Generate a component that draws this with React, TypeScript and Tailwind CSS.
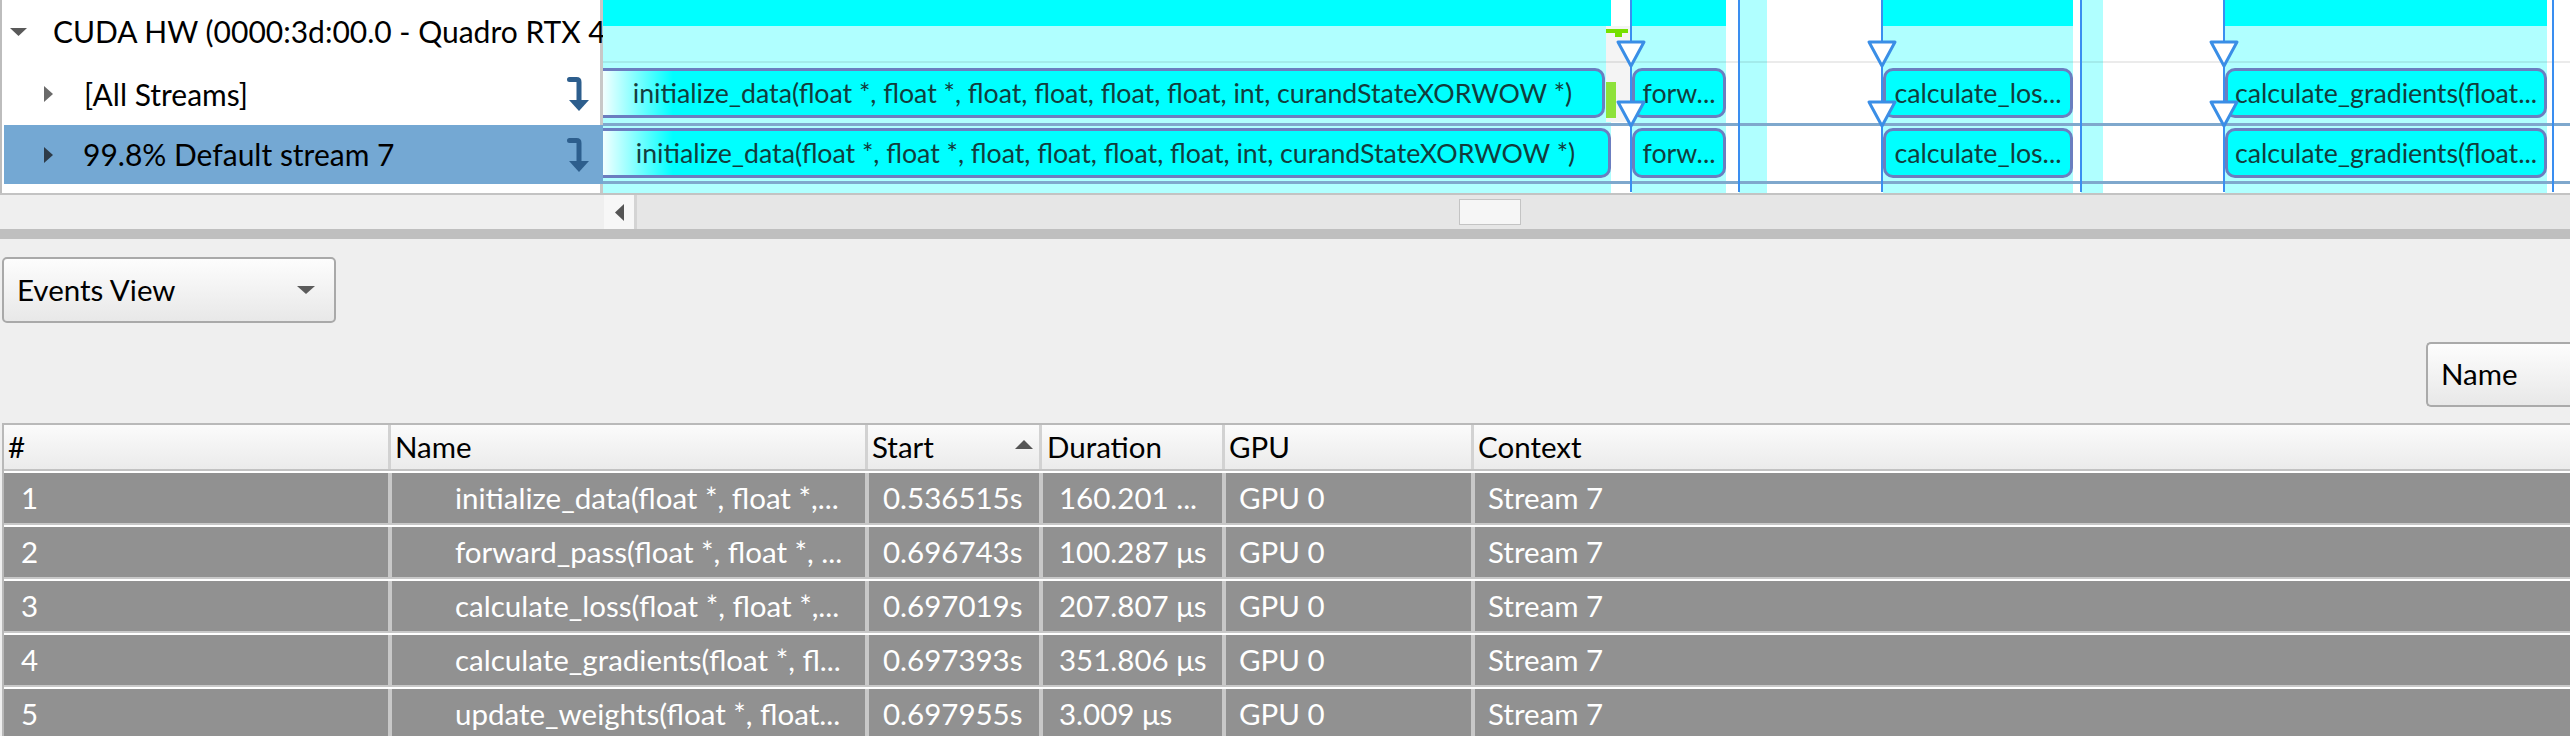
import React from 'react'

// timeline pieces, x is relative to the left edge of the timeline (page x 603)
interface Band {
  left: number
  width: number
  top: boolean
}

interface Kernel {
  left: number
  width: number
  label: string
  cut?: boolean
}

const bands: Band[] = [
  { left: 0, width: 1008, top: true },
  { left: 1029, width: 94, top: true },
  { left: 1136, width: 28, top: false },
  { left: 1280, width: 190, top: true },
  { left: 1478, width: 22, top: false },
  { left: 1622, width: 322, top: true },
]

const blueLines = [1027, 1135, 1278, 1477, 1620, 1949]
const markers = [1028, 1279, 1621]

const INIT_LABEL =
  'initialize_data(float *, float *, float, float, float, float, int, curandStateXORWOW *)'

const streamRow: Kernel[] = [
  { left: 0, width: 1002, label: INIT_LABEL, cut: true },
  { left: 1029, width: 94, label: 'forw...' },
  { left: 1280, width: 190, label: 'calculate_los...' },
  { left: 1622, width: 322, label: 'calculate_gradients(float...' },
]

const defaultRow: Kernel[] = [
  { left: 0, width: 1008, label: INIT_LABEL, cut: true },
  { left: 1029, width: 94, label: 'forw...' },
  { left: 1280, width: 190, label: 'calculate_los...' },
  { left: 1622, width: 322, label: 'calculate_gradients(float...' },
]

const events = [
  { id: 1, name: 'initialize_data(float *, float *,...', start: '0.536515s', duration: '160.201 ...' },
  { id: 2, name: 'forward_pass(float *, float *, ...', start: '0.696743s', duration: '100.287 μs' },
  { id: 3, name: 'calculate_loss(float *, float *,...', start: '0.697019s', duration: '207.807 μs' },
  { id: 4, name: 'calculate_gradients(float *, fl...', start: '0.697393s', duration: '351.806 μs' },
  { id: 5, name: 'update_weights(float *, float...', start: '0.697955s', duration: '3.009 μs' },
]

const HookArrow: React.FC = () => (
  <svg width="22" height="34" viewBox="0 0 22 34">
    <path
      d="M2.5 2.5H9.5Q12 2.5 12 5V25"
      fill="none"
      stroke="#2d5e8d"
      strokeWidth="5"
      strokeLinecap="round"
    />
    <polygon points="2,23 22,23 12,34" fill="#2d5e8d" />
  </svg>
)

const RightTriangle: React.FC<{ color: string }> = ({ color }) => (
  <svg width="9" height="16" viewBox="0 0 9 16" className="shrink-0">
    <polygon points="0,0 9,8 0,16" fill={color} />
  </svg>
)

const KernelBox: React.FC<{ k: Kernel; top: number }> = ({ k, top }) => (
  <div
    className={
      k.cut
        ? 'absolute h-[50px] flex items-center justify-center overflow-hidden whitespace-nowrap rounded-r-[10px] border-y-[3px] border-r-[3px] border-[#6b7ec0] bg-[linear-gradient(90deg,#f2ffff_0px,#00ffff_70px)] text-[26.7px] text-[#123d3d]'
        : 'absolute h-[50px] flex items-center justify-center overflow-hidden whitespace-nowrap rounded-[10px] border-[3px] border-[#6b7ec0] bg-[#00ffff] px-[4px] text-[26.7px] text-[#123d3d]'
    }
    style={{ left: k.left, width: k.width, top }}
  >
    {k.label}
  </div>
)

const Marker: React.FC<{ x: number; top: number }> = ({ x, top }) => (
  <svg
    width="32"
    height="30"
    viewBox="0 0 32 30"
    className="absolute"
    style={{ left: x - 16, top }}
  >
    <polygon
      points="3,3 29,3 16,27"
      fill="white"
      stroke="#3a8ee6"
      strokeWidth="3"
      strokeLinejoin="round"
    />
  </svg>
)

const Timeline: React.FC = () => (
  <div className="relative flex-1 overflow-hidden bg-white">
    {bands.map((b) => (
      <div
        key={b.left}
        className="absolute top-0 bottom-0 bg-[#b0ffff]"
        style={{ left: b.left, width: b.width }}
      >
        {b.top && <div className="h-[26px] bg-[#00ffff]" />}
      </div>
    ))}

    {/* gap after the first kernel */}
    <div className="absolute left-[1003px] top-[26px] h-[96px] w-[24px] bg-[#f4f4f4]" />
    <div className="absolute left-[1003px] top-[29px] h-[4px] w-[22px] bg-[#76e000]" />
    <div className="absolute left-[1012px] top-[33px] h-[4px] w-[7px] bg-[#76e000]" />
    <div className="absolute left-[1003px] top-[82px] h-[36px] w-[10px] bg-[#8ee23a]" />

    {/* row separators */}
    <div className="absolute left-0 right-0 top-[61px] h-[2px] bg-black/[0.08]" />
    <div className="absolute left-0 right-0 top-[123px] h-[3px] bg-[#7fa8cd]" />
    <div className="absolute left-0 right-0 top-[181px] h-[3px] bg-[#7fa8cd]" />

    {blueLines.map((x) => (
      <div
        key={x}
        className="absolute top-0 h-[192px] w-[2px] bg-[#3a8ef0]"
        style={{ left: x }}
      />
    ))}

    {streamRow.map((k) => (
      <KernelBox key={'s' + k.left} k={k} top={68} />
    ))}
    {defaultRow.map((k) => (
      <KernelBox key={'d' + k.left} k={k} top={128} />
    ))}

    {markers.map((x) => (
      <React.Fragment key={x}>
        <Marker x={x} top={39} />
        <Marker x={x} top={99} />
      </React.Fragment>
    ))}
  </div>
)

const TreePanel: React.FC = () => (
  <div className="flex w-[603px] border-l-2 border-r-[3px] border-l-[#bdbdbd] border-r-[#c8c8c8] bg-white">
    <div className="flex flex-1 flex-col pl-[2px] text-[30px] text-black">
      <div className="flex h-[63px] items-center overflow-hidden whitespace-nowrap">
        <svg width="17" height="8" viewBox="0 0 17 8" className="ml-[6px] shrink-0">
          <polygon points="0,0 17,0 8.5,8" fill="#595959" />
        </svg>
        <span className="ml-[26px]">CUDA HW (0000:3d:00.0 - Quadro RTX 4</span>
      </div>
      <div className="flex h-[62px] items-center whitespace-nowrap">
        <div className="ml-[40px]">
          <RightTriangle color="#6a6a6a" />
        </div>
        <span className="ml-[31px] flex-1">[All Streams]</span>
        <div className="mr-[17px] flex">
          <HookArrow />
        </div>
      </div>
      <div className="flex h-[59px] items-center whitespace-nowrap bg-[#74a8d3]">
        <div className="ml-[40px]">
          <RightTriangle color="#2e3b48" />
        </div>
        <span className="ml-[30px] flex-1">99.8% Default stream 7</span>
        <div className="mr-[17px] flex">
          <HookArrow />
        </div>
      </div>
    </div>
    <div className="flex w-[11px] flex-col">
      <div className="h-[61px] bg-[#80fffc]" />
      <div className="h-[7px]" />
      <div className="h-[54px] bg-[#80fffc]" />
      <div className="h-[3px]" />
      <div className="h-[3px] bg-[#74a8d3]" />
      <div className="h-[55px] bg-[#3cd6e8]" />
      <div className="h-[1px] bg-[#74a8d3]" />
    </div>
  </div>
)

const ScrollBar: React.FC = () => (
  <div className="flex h-[34px]">
    <div className="w-[604px] bg-[#efefef]" />
    <div className="flex w-[30px] items-center justify-center bg-[#f7f7f7]">
      <svg width="9" height="17" viewBox="0 0 9 17">
        <polygon points="9,0 0,8.5 9,17" fill="#555555" />
      </svg>
    </div>
    <div className="w-[3px] bg-[#d4d4d4]" />
    <div className="flex flex-1 items-center bg-[#e6e6e6]">
      <div className="ml-[822px] h-[26px] w-[62px] border border-[#c4c4c4] bg-[#f6f6f6]" />
    </div>
  </div>
)

const headerCell =
  'flex h-[44px] items-center border-l-[3px] border-[#d2d2d2] pl-[4px]'
const rowCell = 'flex h-[50px] items-center border-l-4 border-[#c8c8c8]'

const EventsTable: React.FC = () => (
  <div className="ml-[2px] border-l-2 border-t-2 border-[#b9b9b9] text-[29.5px]">
    <div className="flex border-b-2 border-[#c2c2c2] bg-linear-to-b from-[#fbfbfb] to-[#ebebeb] text-black">
      <div className="flex h-[44px] w-[384px] items-center pl-[4px]">#</div>
      <div className={headerCell + ' w-[477px]'}>Name</div>
      <div className={headerCell + ' w-[174px]'}>
        <span className="flex-1">Start</span>
        <svg width="18" height="9" viewBox="0 0 18 9" className="mr-[6px] mb-[6px]">
          <polygon points="0,9 18,9 9,0" fill="#555555" />
        </svg>
      </div>
      <div className={headerCell + ' w-[183px] pl-[5px]'}>Duration</div>
      <div className={headerCell + ' w-[249px]'}>GPU</div>
      <div className={headerCell + ' flex-1'}>Context</div>
    </div>
    {events.map((e) => (
      <div
        key={e.id}
        className="flex border-t-2 border-b-2 border-t-white border-b-[#c8c8c8] bg-[#919191] text-white whitespace-nowrap"
      >
        <div className="flex h-[50px] w-[384px] items-center pl-[17px]">{e.id}</div>
        <div className={rowCell + ' w-[477px] overflow-hidden pl-[63px]'}>{e.name}</div>
        <div className={rowCell + ' w-[174px] pl-[14px]'}>{e.start}</div>
        <div className={rowCell + ' w-[183px] pl-[16px]'}>{e.duration}</div>
        <div className={rowCell + ' w-[249px] pl-[13px]'}>GPU 0</div>
        <div className={rowCell + ' flex-1 pl-[13px]'}>Stream 7</div>
      </div>
    ))}
  </div>
)

export default function App() {
  return (
    <div className="h-[736px] w-[2570px] overflow-hidden bg-[#efefef] font-[family-name:Lato,sans-serif]">
      <div className="flex h-[195px] border-b-2 border-[#c3c3c3] bg-white">
        <TreePanel />
        <Timeline />
      </div>
      <ScrollBar />
      <div className="h-[10px] bg-[#bfbfbf]" />

      <div className="flex flex-col">
        <div className="ml-[2px] mt-[18px] flex h-[66px] w-[334px] items-center rounded-[5px] border-2 border-[#a9a9a9] bg-linear-to-b from-[#fdfdfd] to-[#e8e8e8] pl-[13px] pr-[19px] text-[29.5px] text-black">
          <span className="flex-1">Events View</span>
          <svg width="18" height="8" viewBox="0 0 18 8">
            <polygon points="0,0 18,0 9,8" fill="#5b5b5b" />
          </svg>
        </div>

        <div className="mt-[19px] flex justify-end">
          <div className="flex h-[65px] w-[144px] items-center rounded-l-[5px] border-y-2 border-l-2 border-[#aaaaaa] bg-linear-to-b from-[#fdfdfd] to-[#e8e8e8] pl-[13px] text-[29.5px] text-black">
            Name
          </div>
        </div>

        <div className="mt-[16px]">
          <EventsTable />
        </div>
      </div>
    </div>
  )
}
